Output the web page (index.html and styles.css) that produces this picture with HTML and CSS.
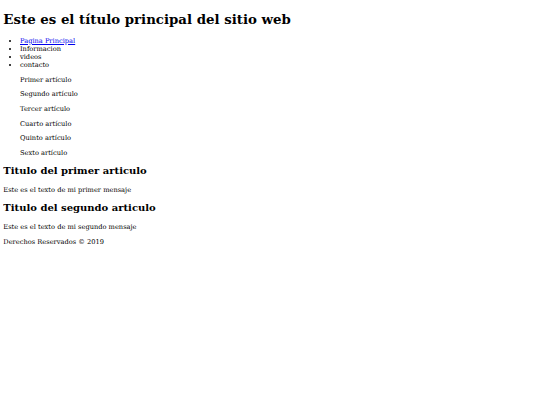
FILE: index.html
```html
<!DOCTYPE html>
<html lang="es">
<head>
<meta charset="utf-8">
<title>Sitio web</title>
<link rel="stylesheet" href="styles.css">
</head>
<body>
<header>
<h1>Este es el título principal del sitio web</h1>
<nav>
<ul class="menu">
<li><a href="#">Pagina Principal</a></li>
<li>Informacion</li>
<li>videos</li>
<li>contacto</li>
</ul>
</nav>
</header>
<aside class="articulos">
<p>Primer artículo</p>
<p>Segundo artículo</p>
<p>Tercer artículo</p>
<p>Cuarto artículo</p>
<p>Quinto artículo</p>
<p>Sexto artículo</p>
</aside>
<section>
<article>
<h2>Titulo del primer articulo</h2>
<p>Este es el texto de mi primer mensaje</p>
</article>
<article>
<h2>Titulo del segundo articulo</h2>
<p>Este es el texto de mi segundo mensaje</p>
</article>
</section>
<footer>Derechos Reservados © 2019</footer>
</body>
</html>
```
FILE: styles.css
```css
html {
  background: #fff;
}
body {
  margin: 3.333px;
  font-family: "DejaVu Serif", serif;
  font-size: 6.667px;
  line-height: 8px;
  color: #000;
}
h1 {
  font-size: 13.333px;
  line-height: 16px;
  font-weight: bold;
  margin: 8px 0 9.5px;
}
h2 {
  font-size: 10px;
  line-height: 12px;
  font-weight: bold;
  margin: 8.5px 0;
}
p {
  margin: 6.7px 0;
}
.menu {
  margin: 6.7px 0;
  padding-left: 16.667px;
  list-style: disc;
}
.menu a {
  color: #0000ee;
}
.articulos {
  padding-left: 16.667px;
}
footer {
  margin: 0;
}
```
